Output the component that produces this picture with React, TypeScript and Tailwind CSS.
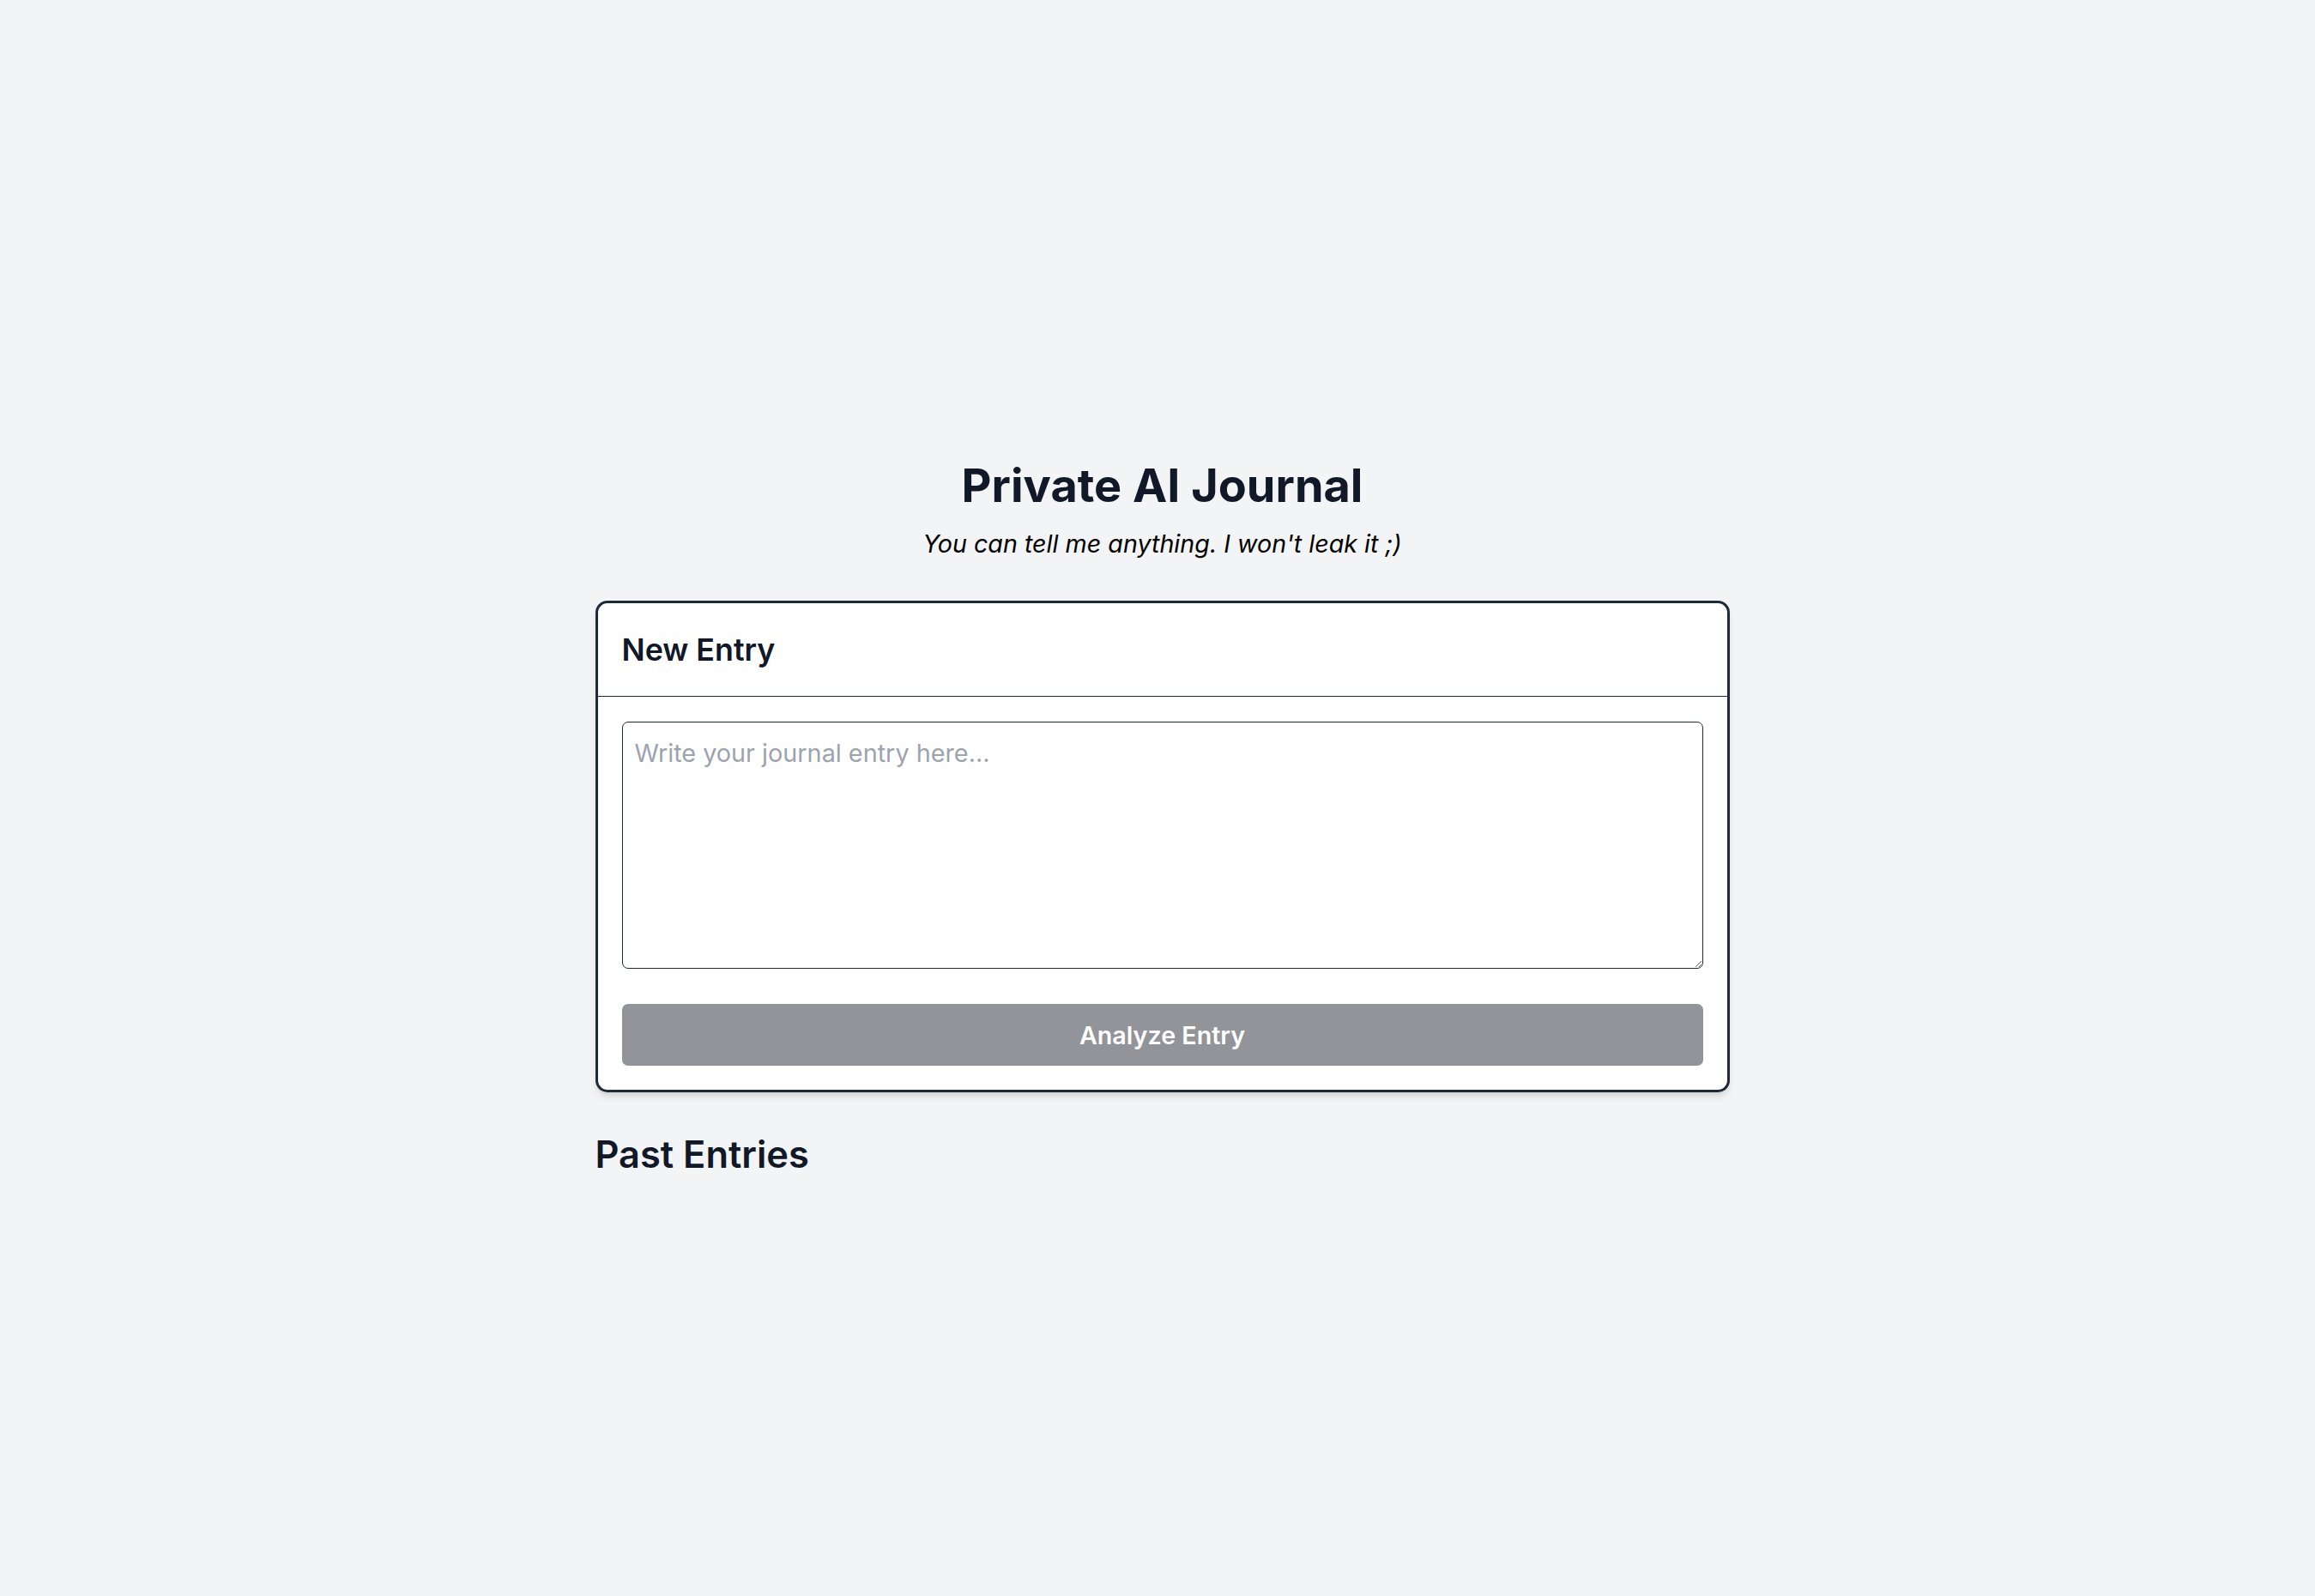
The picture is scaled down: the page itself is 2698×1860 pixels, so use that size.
import { useState } from "react";

const App = () => {
  const [entry, setEntry] = useState("");

  return (
    <div
      className="min-h-screen bg-[#f3f4f6] flex justify-center pl-[11px] pt-[535px]"
      style={{ fontFamily: "Inter, 'Noto Sans', sans-serif" }}
    >
      <div className="w-[1322px] flex flex-col">
        <h1 className="text-center text-[54px] leading-[62px] font-bold text-[#111827]">
          Private AI Journal
        </h1>
        <p className="mt-[16px] text-center text-[28.7px] leading-[41px] italic text-black">
          You can tell me anything. I won't leak it ;)
        </p>

        <div className="mt-[46px] bg-white border-[3px] border-[#1f2937] rounded-[14px] shadow-[0_7px_10px_-2px_rgba(0,0,0,0.1),0_3px_7px_-3px_rgba(0,0,0,0.1)]">
          <div className="px-[28px] py-[30px] border-b border-[#1f2937]">
            <h2 className="text-[35.8px] leading-[48px] font-semibold text-[#111827]">
              New Entry
            </h2>
          </div>
          <div className="px-[28px] pt-[29px] pb-[28px] flex flex-col">
            <textarea
              value={entry}
              onChange={(e) => setEntry(e.target.value)}
              placeholder="Write your journal entry here..."
              className="block w-full h-[288px] px-[14px] py-[15px] border border-[#1f2937] rounded-[7px] text-[28.8px] leading-[41px] text-[#111827] placeholder:text-[#9ca3af] outline-none resize-y"
            />
            <button
              disabled={!entry}
              className="mt-[41px] h-[72px] w-full rounded-[7px] bg-[#92949a] text-white text-[28.7px] leading-[41px] font-semibold"
            >
              Analyze Entry
            </button>
          </div>
        </div>

        <h2 className="mt-[45px] text-[43.4px] leading-[55px] font-semibold text-[#111827]">
          Past Entries
        </h2>
      </div>
    </div>
  );
};

export default App;
